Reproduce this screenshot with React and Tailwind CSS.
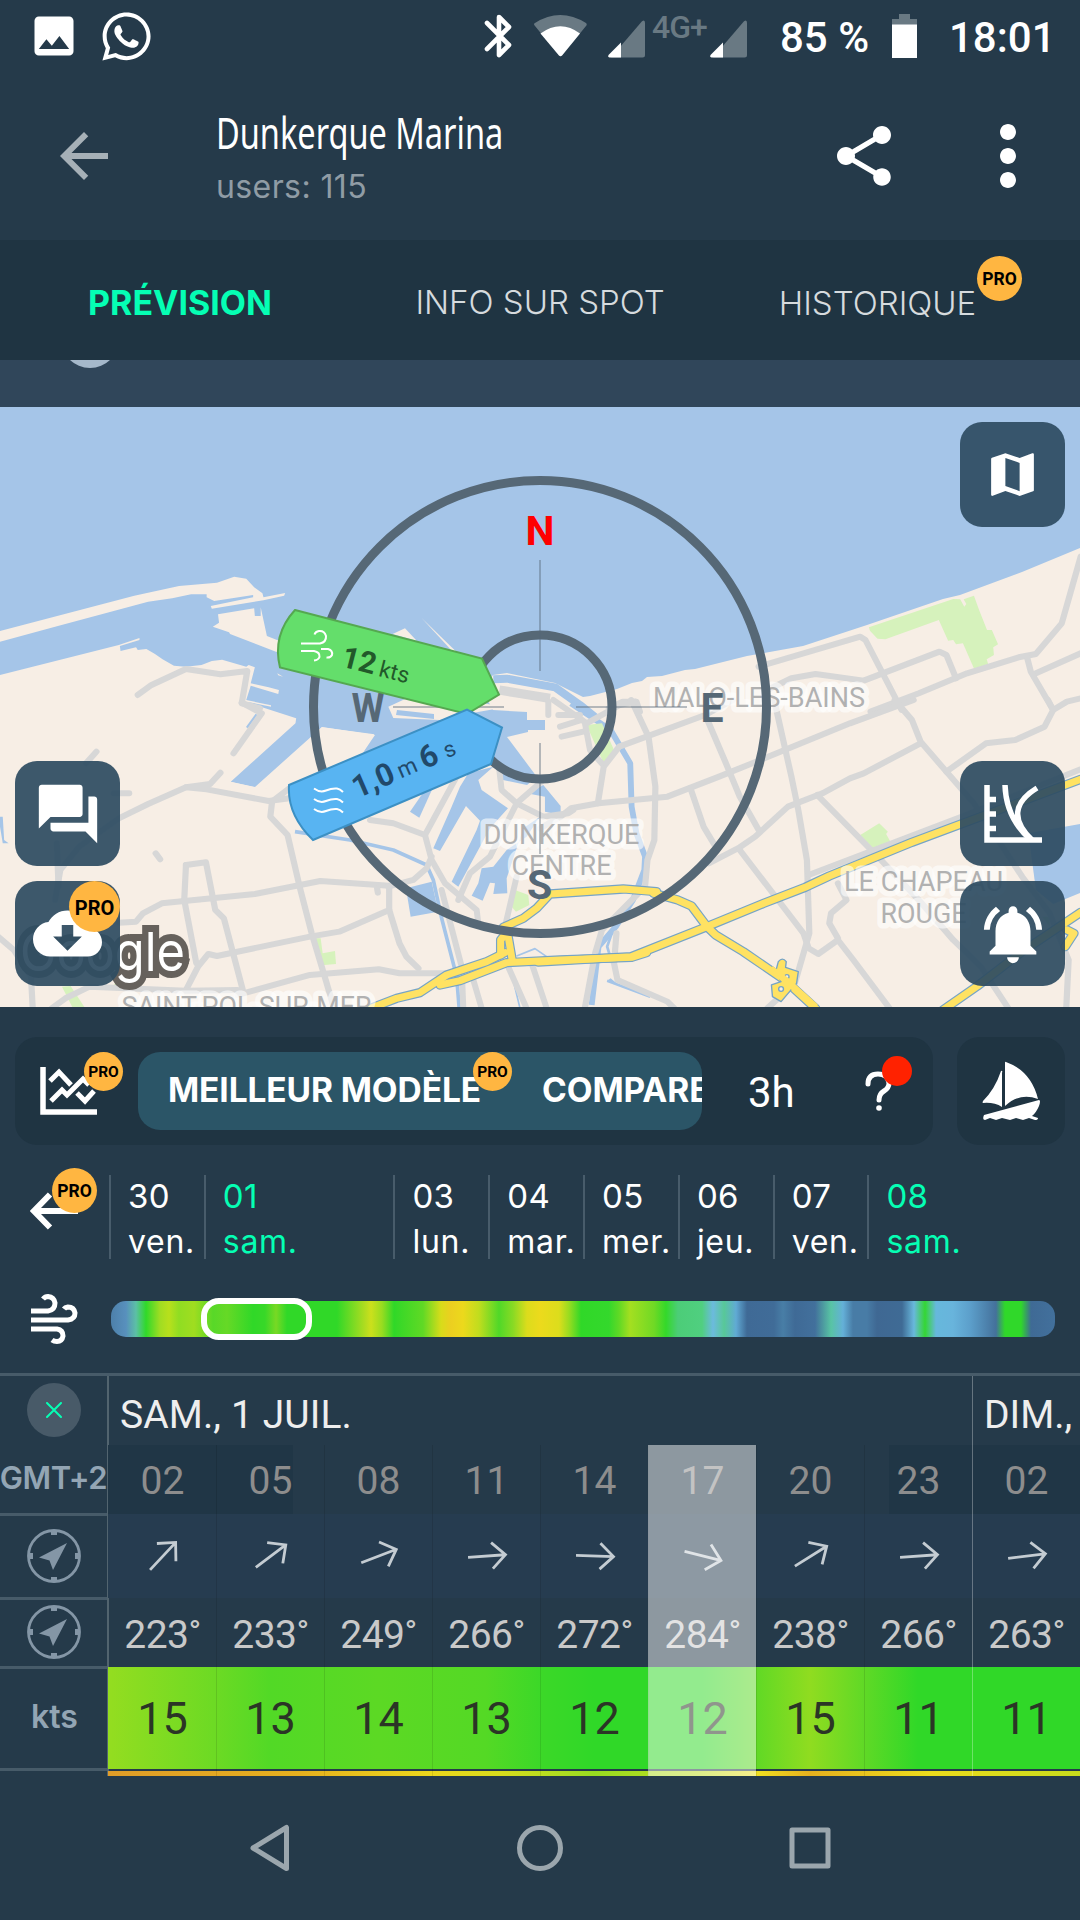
import React from "react";
import {
  MdArrowBack,
  MdCloudDownload,
  MdForum,
  MdImage,
  MdMap,
  MdMoreVert,
  MdNotificationsActive,
  MdShare,
} from "react-icons/md";
import { FaWhatsapp } from "react-icons/fa";

/* ---------- Shared bits ---------- */

const badgeSizes = {
  sm: "h-[39px] w-[39px] text-[15.5px]",
  md: "h-[45px] w-[45px] text-[17.5px]",
  lg: "h-[51px] w-[51px] text-[20px]",
};

function ProBadge({ size = "md", className = "" }) {
  return (
    <span
      className={`flex items-center justify-center rounded-full bg-[#ffb641] pt-[3px] font-['Roboto',sans-serif] font-bold leading-none text-black ${badgeSizes[size]} ${className}`}
    >
      PRO
    </span>
  );
}

function gradient(stops, from, to) {
  const list = stops
    .map(([x, color]) => `${color} ${(((x - from) / (to - from)) * 100).toFixed(2)}%`)
    .join(", ");
  return `linear-gradient(90deg, ${list})`;
}

/* ---------- Status bar ---------- */

function Signal({ className }) {
  return (
    <svg width="37" height="38" viewBox="0 0 37 38" className={className}>
      <path d="M3 37.5 34 1.2Q37 -1 37 3V35q0 2.5-2.5 2.5Z" fill="#697983" />
      <path d="M13 22.500V37.500H1.500Q-1 37 1 34.500Z" fill="#fff" />
    </svg>
  );
}

function StatusBar() {
  return (
    <div className="flex h-[72px] items-center font-['Roboto',sans-serif] text-white">
      <MdImage className="ml-[28px] h-[52px] w-[52px]" />
      <FaWhatsapp className="ml-[19px] h-[55px] w-[55px]" />
      <svg width="28" height="44" viewBox="0 0 28 44" className="ml-[330px]">
        <path
          d="M3 9 25 31 15 41V3L25 13 3 35"
          fill="none"
          stroke="#fff"
          strokeWidth="4.6"
          strokeLinecap="round"
          strokeLinejoin="round"
        />
      </svg>
      <svg width="53" height="42" viewBox="0 0 53 42" className="ml-[22px]">
        <path d="M1 11Q-1 9 1 8Q26 -8 52 8Q53.500 9.500 52 11L28 40.500Q26.500 42 25 40.500Z" fill="#697983" />
        <path d="M6.500 18.500Q26.500 4 46 18.500L28 40.500Q26.500 42 25 40.500Z" fill="#fff" />
      </svg>
      <Signal className="ml-[21px] mt-[5px]" />
      <span className="-mt-[19px] ml-[7px] w-[56px] whitespace-nowrap text-[32px] font-medium leading-none tracking-[-1px] text-[#697983]">
        4G+
      </span>
      <Signal className="ml-[2px] mt-[5px]" />
      <span className="ml-[33px] w-[88px] whitespace-nowrap pt-[3px] text-[42px] font-medium leading-none">85 %</span>
      <svg width="25" height="44" viewBox="0 0 25 44" className="ml-[24px]">
        <path d="M7 0H18V5H25V12H0V5H7Z" fill="#697983" />
        <path d="M0 10.500H25V44H0Z" fill="#fff" />
      </svg>
      <span className="ml-[32px] whitespace-nowrap pt-[3px] text-[42px] font-medium leading-none">18:01</span>
    </div>
  );
}

/* ---------- App bar and tabs ---------- */

function AppBar() {
  return (
    <header className="flex h-[168px] items-center">
      <MdArrowBack className="ml-[48px] h-[72px] w-[72px] text-[#a6b0b7]" />
      <div className="ml-[96px] flex w-[480px] flex-col pt-[5px]">
        <h1 className="origin-left scale-x-[0.731] whitespace-nowrap font-['Noto_Sans',sans-serif] text-[44.500px] font-normal leading-[54px] text-white">
          Dunkerque Marina
        </h1>
        <p className="pt-[3px] font-['Inter',sans-serif] text-[32px] font-normal leading-[50px] tracking-[0.4px] text-[#909ca5]">
          users: 115
        </p>
      </div>
      <MdShare className="ml-[132px] h-[72px] w-[72px] text-white" />
      <MdMoreVert className="ml-[60px] h-[96px] w-[96px] text-white" />
    </header>
  );
}

function Tabs() {
  return (
    <nav className="grid h-[120px] grid-cols-3 items-center bg-[#1f3442] text-center font-['Inter',sans-serif] text-[33px] leading-[40px]">
      <span className="pt-[5px] text-[34px] font-bold tracking-[0px] text-[#05ffb4]">PRÉVISION</span>
      <span className="pt-[3px] font-light text-[#d6dbde]">INFO SUR SPOT</span>
      <span className="relative pr-[45px] pt-[5px] font-light text-[#d6dbde]">
        HISTORIQUE
        <ProBadge className="absolute left-[257px] top-[-22px]" />
      </span>
    </nav>
  );
}

/* ---------- Map ---------- */

const ROAD = "#d7d7d7";
const WATER = "#a5c5e8";
const LAND = "#f7eee5";
const PARK = "#d6f2bc";

const tiles = {
  nw: "translate(0 400) scale(.3444 .3333)",
  ne: "translate(540 400) scale(.3444 .3333)",
  sw: "translate(0 700) scale(.3444 .3333)",
  se: "translate(540 700) scale(.3444 .3333)",
  mid: "translate(260 590) scale(.3333)",
};

const roads = {
  nw: ["400,885 440,855 540,807 640,823 718,813 702,910 755,925"],
  ne: [
    "635,800 930,710 945,720 1050,930",
    "660,870 730,835 800,822 940,842 1160,755 1180,765 1208,835",
    "960,935 1100,880 1240,820 1390,772 1440,762 1515,670 1570,470",
    "1440,820 1570,760",
    "1415,775 1425,815 1490,930 1530,905 1570,895",
    "200,925 240,905 280,905 290,935",
  ],
  sw: [
    "702,8 760,40 678,160",
    "640,218 610,252 540,262 430,312 345,355 230,440 175,510 160,600",
    "540,262 600,268 780,303 840,295",
    "840,265 790,305 785,350 835,405 870,560 905,700 940,820 970,925",
    "375,280 330,280",
    "280,155 250,190",
    "165,430 170,560",
    "452,460 465,478",
    "540,495 598,487 625,630 650,655 705,870",
    "540,495 535,600 570,790",
    "345,668 395,665 415,640 470,610 740,582 930,543 1130,557 1130,630 985,695 900,710 630,768 605,762 575,800 540,870",
    "1130,630 1160,730 1180,770 1215,805",
    "690,885 900,825 1100,808 1160,820 1300,820",
    "150,925 190,895 260,860 540,872 690,870",
    "-5,710 40,750 90,830 95,925",
    "1095,565 1097,578",
  ],
  se: [
    "0,385 60,350 90,325 170,310 370,290 520,230 640,180 900,70 1085,0",
    "168,310 185,200 230,140 480,45 560,0",
    "265,0 315,110 335,260 332,420 312,480 305,560 180,690 160,760 130,925",
    "480,45 540,190 580,290 635,390",
    "680,0 730,230 750,330 775,480 782,700 740,850 660,925",
    "437,265 475,380 510,440",
    "490,490 580,442 625,410 720,320 820,280 900,235 940,220 1105,130",
    "580,450 765,700 780,745 808,762 865,720 910,780 1015,925",
    "865,550 890,600 845,640 840,670 865,715",
    "805,285 990,480 1100,600 1200,720 1280,800 1360,925",
    "1030,0 1080,60 1105,125 1180,215 1260,310 1400,530 1480,640 1535,780 1528,925",
    "1180,215 1295,130 1380,120 1465,80 1490,30 1475,0",
    "780,525 1220,352 1570,208",
    "222,700 215,790 225,840 370,905 390,925",
  ],
  mid: [
    "865,335 865,375",
    "895,375 960,375",
    "900,410 965,390",
    "905,440 970,425",
    "975,400 990,480 1025,520",
    "880,330 930,365 980,400 1080,345 1125,335",
    "330,690 400,700 495,735 515,810 555,880 650,960 655,1000",
    "495,735 590,560",
    "385,890 460,870 500,835 515,800",
    "718,540 725,600 770,640 850,680 925,670 940,660",
    "850,570 770,640 690,800 630,850 595,930",
    "770,860 735,1010",
    "545,900 605,1130 610,1255",
    "740,1120 800,1255",
    "640,1170 665,1255",
    "815,1120 860,1255",
  ],
};

const water = {
  mid: [
    "450,665 478,683 520,590 495,600",
    "520,775 540,783 618,648 660,692 650,720 575,875 595,890 690,715 744,655 665,600 655,570 700,530 625,550 600,590 575,650",
    "665,835 700,830 740,780 800,740 840,680 790,715 740,865 742,910 700,912 705,880 690,878 668,932 635,917 655,880",
    "438,895 515,875 535,965 452,980",
    "800,610 850,585 902,648 902,675 855,665 855,620",
  ],
  se: ["1418,400 1570,372 1570,578 1490,612 1440,570", "195,842 225,852 205,835"],
  sw: ["0,350 8,350 12,420 25,430 8,430 0,380"],
};

const parks = {
  ne: [
    "955,682 1200,597 1220,598 1232,620 1238,612 1230,598 1260,587 1275,630 1298,690 1312,690 1330,733 1316,742 1318,765 1297,778 1302,795 1262,810 1228,730 1208,733 1200,720 1185,722 1158,660 1003,718 980,716 958,692",
  ],
  se: [
    "930,405 985,370 1010,395 1005,402 1020,430 972,450",
    "135,75 180,70 215,150 185,190",
    "1458,650 1480,650 1480,680",
  ],
  sw: ["180,860 205,858 245,921 210,921", "330,855 350,835 380,860"],
  mid: ["165,1045 182,1045 188,1090 225,1083 228,1122 185,1126", "765,900 805,915 808,945 768,965 755,950"],
};

const highways = {
  se: [
    "-5,786 265,770 480,682 650,610 770,562 840,528 1080,427 1570,238",
    "330,580 400,600 440,618 485,680 510,705 590,755 710,840 800,925",
    "1170,930 1270,858 1400,755 1570,637",
    "1530,690 1550,700 1525,740",
  ],
  mid: [
    "730,1012 790,985 830,955 870,912 1090,897 1190,905",
    "330,1256 410,1225 480,1208 560,1155 680,1115 735,1088",
    "540,1185 600,1172 740,1118 900,1110 1115,1102 1160,1088",
    "742,1025 722,1050 722,1095",
    "742,1025 757,1112",
  ],
};

function Shapes({ groups, fill }) {
  return Object.entries(groups).map(([tile, list]) => (
    <g key={tile} transform={tiles[tile]} fill={fill}>
      {list.map((points) => (
        <polygon key={points} points={points} />
      ))}
    </g>
  ));
}

function Lines({ groups, stroke, width }) {
  return Object.entries(groups).map(([tile, list]) => (
    <g
      key={tile}
      transform={tiles[tile]}
      fill="none"
      stroke={stroke}
      strokeWidth={width}
      strokeLinecap="round"
      strokeLinejoin="round"
    >
      {list.map((points) => (
        <polyline key={points} points={points} />
      ))}
    </g>
  ));
}

const placeNames = [
  { text: "MALO-LES-BAINS", x: 759, y: 707, w: 212 },
  { text: "DUNKERQUE", x: 561.5, y: 843.5, w: 156 },
  { text: "CENTRE", x: 561.5, y: 875, w: 100 },
  { text: "LE CHAPEAU", x: 923.5, y: 891, w: 159 },
  { text: "ROUGE", x: 923.5, y: 923, w: 86 },
  { text: "SAINT-POL-SUR-MER", x: 246.5, y: 1016, w: 250 },
];

function Compass() {
  return (
    <g fontFamily="Roboto, sans-serif">
      <g fill="none" stroke="#566876" strokeWidth="9">
        <circle cx="540" cy="707" r="226.500" />
        <circle cx="540" cy="707" r="72" />
      </g>
      <path
        d="M540 560V671M540 743V854M393 707H504M576 707H687"
        stroke="#566876"
        strokeOpacity=".55"
        strokeWidth="1.500"
      />
      <g fontSize="41" fontWeight="700" fill="#566876" textAnchor="middle">
        <text x="540" y="545" fill="#ff0000">N</text>
        <text x="368" y="722" textLength="33" lengthAdjust="spacingAndGlyphs">W</text>
        <text x="712" y="722">E</text>
        <text x="539.500" y="899">S</text>
      </g>

      {/* wind marker */}
      <g>
        <path
          d="M295 610 482 658.500 499 694.500 467 714 280 667.500Q272 635 295 610Z"
          fill="#64de6b"
          stroke="#55a850"
          strokeWidth="2"
        />
        <path
          d="M301 643.500H320Q326.500 642 326 636Q324.500 630.500 319 631Q315.500 631.500 314.500 634.500M301 651H314Q320 652 319.500 657Q318.500 660 314 660.500M321 649H328Q333 650.500 332 655Q330.500 658 326.500 657.500"
          fill="none"
          stroke="#fff"
          strokeWidth="2"
        />
        <g transform="translate(340 666) rotate(14.500)" fill="#22592a">
          <text fontSize="30" fontWeight="700">12</text>
          <text x="39" y="0" fontSize="22.500">kts</text>
        </g>
      </g>

      {/* wave marker */}
      <g>
        <path
          d="M289 785 467 709.500 502 727.500 491 764 313 840Q287 815 289 785Z"
          fill="#58b4f2"
          stroke="#3c90c4"
          strokeWidth="2"
        />
        <path
          d="M314 788.500Q320 793 326 790.500T337 788.500Q340 789 343 792M314 799Q320 803.500 326 801T337 799Q340 799.500 343 802.500M314 809Q320 813.500 326 811T337 809Q340 809.500 343 812.500"
          fill="none"
          stroke="#fff"
          strokeWidth="2"
        />
        <g transform="translate(357.500 798.500) rotate(-23.500)" fill="#21496a">
          <text fontSize="31" fontWeight="700">1,0</text>
          <text x="48" y="-1" fontSize="22.500">m</text>
          <text x="73" fontSize="31" fontWeight="700">6</text>
          <text x="98" y="-1" fontSize="22.500">s</text>
        </g>
      </g>
    </g>
  );
}

function MapCanvas() {
  return (
    <svg width="1080" height="600" viewBox="0 407 1080 600" className="block">
      <rect y="407" width="1080" height="600" fill={LAND} />
      <path
        fill={WATER}
        d="M0 407H1080V548L1022 572 960 595 943 599 867 625 803 646 764 653 747 656 695 669 685 670 662 676 647 677 642 681 632 683 617 689 590 696 583 697 555 683 507 673 493 675 482 690 493 710 527 712V720H545V730H528V732L507 737 537 777 527 785 503 780 493 757H360L375 735 322 727 255 787 231 782H0Z"
      />
      {/* harbour land */}
      <g transform={tiles.nw} fill={LAND}>
        <path d="M0 693 390 587 520 558 630 548 680 530 715 536 738 562 762 580 765 592 828 579 825 587 765 601 615 626 612 618 735 592V585L622 603 600 592V583H555L500 595 430 605 160 680 0 725Z" />
        <path d="M633 643 738 625 740 648H757V622L775 708 810 722 840 775 805 757 668 702 665 697 618 680 636 668Z" />
        <path d="M0 825 345 735 405 714V720L348 738 350 753 395 742 400 750 425 747 450 762 472 778 505 797 540 800 585 795 615 783 645 779 715 800 722 795 740 802 728 850 780 862 810 870 808 882 728 857 715 900 787 916V920L715 905 770 925 860 955 858 970 670 1145 740 1162V1500H0Z" />
        <path d="M805 820 822 830 808 826Z" />
        <path d="M1140 702 1176 685 1210 722Z" />
        <path d="M1225 655 1325 755 1312 752Z" />
      </g>
      <g transform={tiles.mid} fill={LAND}>
        <path d="M385 350 450 320 620 330 735 352 620 372 540 390 400 384Z" />
        <path d="M185 412 343 433 300 500 180 560 0 600Z" />
      </g>
      <path d="M397 710 434 714V719L396 715Z" fill={WATER} />

      <Shapes groups={water} fill={WATER} />
      <g fill="none" stroke={WATER} strokeLinejoin="round">
        <g transform={tiles.mid}>
          <path d="M700 268 740 266 885 292 960 345 1010 385" strokeWidth="24" />
          <path d="M105 725 270 750 400 780 500 825 520 870 545 985 590 1160 598 1260" strokeWidth="11" />
          <path d="M770 1098 825 1076 860 1100M750 1130 780 1255" strokeWidth="5" />
        </g>
        <g transform={tiles.se}>
          <path d="M90 10 205 90 262 190 266 320 280 400 305 470 303 510 270 600 220 680 170 740 150 915" strokeWidth="17" />
          <path d="M215 680 195 740 210 790M195 842 320 890" strokeWidth="8" />
        </g>
        <path transform={tiles.sw} d="M717 83 745 43" strokeWidth="7" />
      </g>
      <Shapes groups={parks} fill={PARK} />

      <path
        transform={tiles.mid}
        d="M718 300 790 312 870 325"
        fill="none"
        stroke={ROAD}
        strokeWidth="28"
      />
      <Lines groups={roads} stroke={ROAD} width="18" />
      <Lines groups={highways} stroke="#76a4c6" width="28" />
      <Lines groups={highways} stroke="#ffe262" width="21" />
      <g transform={tiles.se} stroke="#76a4c6" strokeWidth="4" fill="#ffe262" strokeLinejoin="round">
        <path d="M692 785Q704 770 715 785L713 802 750 815 745 850 700 905 675 890 672 855 700 845 685 812Z" />
        <circle cx="700" cy="867" r="7" fill={LAND} />
        <circle cx="717" cy="830" r="6" fill={LAND} />
      </g>
      <path
        transform={tiles.se}
        d="M670 806 720 846 800 921"
        fill="none"
        stroke="#ffe262"
        strokeWidth="20"
      />

      <g
        fontFamily="Roboto, sans-serif"
        fontSize="28"
        fill="#b1b1b1"
        textAnchor="middle"
        stroke="#ffffff"
        strokeOpacity=".62"
        strokeWidth="11"
        strokeLinejoin="round"
        paintOrder="stroke"
      >
        {placeNames.map((p) => (
          <text key={p.text} x={p.x} y={p.y} textLength={p.w} lengthAdjust="spacingAndGlyphs">
            {p.text}
          </text>
        ))}
      </g>
      <text
        x="20"
        y="971"
        fontFamily="Inter, sans-serif"
        fontSize="54"
        fontWeight="400"
        fill="#ffffff"
        stroke="#66615c"
        strokeWidth="14"
        paintOrder="stroke"
        textLength="165"
        lengthAdjust="spacingAndGlyphs"
      >
        Google
      </text>
      <Compass />
    </svg>
  );
}

function MapButton({ className, children }) {
  return (
    <button
      className={`absolute flex h-[105px] w-[105px] items-center justify-center rounded-[22px] bg-[#2e4c62]/93 text-white ${className}`}
    >
      {children}
    </button>
  );
}

function MapPanel() {
  return (
    <section className="relative h-[600px] overflow-hidden">
      <MapCanvas />
      <MapButton className="right-[15px] top-[15px]">
        <MdMap className="h-[57px] w-[57px]" />
      </MapButton>
      <MapButton className="left-[15px] top-[354px]">
        <MdForum className="h-[70px] w-[70px]" />
      </MapButton>
      <MapButton className="left-[15px] top-[474px]">
        <MdCloudDownload className="h-[69px] w-[69px]" />
        <ProBadge size="lg" className="absolute right-0 top-0" />
      </MapButton>
      <MapButton className="right-[15px] top-[354px]">
        <svg width="58" height="58" viewBox="0 0 58 58" fill="none" stroke="#fff" strokeWidth="5.500">
          <path d="M3 0V55H58M3 14.500H12M3 29H12M3 43.500H12" />
          <path d="M21 0Q22 33 46 54M53 3Q17 25 48 55" />
        </svg>
      </MapButton>
      <MapButton className="right-[15px] top-[474px]">
        <MdNotificationsActive className="h-[70px] w-[70px]" />
      </MapButton>
    </section>
  );
}

/* ---------- Model toolbar ---------- */

function ModelBar() {
  return (
    <div className="mt-[30px] flex h-[108px] pl-[15px] pr-[15px]">
      <div className="flex w-[918px] items-center rounded-[22px] bg-[#1f3442]">
        <div className="relative ml-[25px] h-[48px] w-[57px]">
          <svg width="57" height="48" viewBox="0 0 57 48" fill="none" stroke="#fff" strokeWidth="5">
            <path d="M3 0V45H57" strokeWidth="5.500" />
            <path d="M10 14 19 5 31 18M37 26 45 34 54 24" />
            <path d="M11 34 22 23 27 28 43 12 49 18" />
          </svg>
          <ProBadge size="sm" className="absolute left-[44px] top-[-15px]" />
        </div>
        <div className="relative ml-[41px] w-[564px]">
          <div className="flex h-[78px] items-center overflow-hidden whitespace-nowrap rounded-[22px] bg-[#2b5567] pl-[30px] font-['Inter',sans-serif] text-[33.500px] font-bold leading-none tracking-[-0.1px] text-white">
            <span className="w-[374px] shrink-0 pb-px">MEILLEUR MODÈLE</span>
            <span className="pb-px">COMPARER</span>
          </div>
          <ProBadge size="sm" className="absolute left-[335px] top-0" />
        </div>
        <span className="ml-[46px] pt-[4px] font-['Roboto',sans-serif] text-[42px] leading-none text-white">3h</span>
        <div className="relative ml-[70px] h-[40px] w-[28px]">
          <svg width="28" height="40" viewBox="0 0 28 40" fill="none" stroke="#fff" strokeWidth="5" strokeLinecap="round">
            <path d="M3 13Q3 3 13 3T24 12Q24 17 19 20Q14 23 14 29" />
            <circle cx="14" cy="37" r="2.800" fill="#fff" stroke="none" />
          </svg>
          <span className="absolute left-[17px] top-[-15px] h-[30px] w-[30px] rounded-full bg-[#ff2200]" />
        </div>
      </div>
      <div className="ml-auto flex w-[108px] items-center justify-center rounded-[22px] bg-[#1f3442]">
        <svg width="58" height="60" viewBox="0 0 58 60" fill="#fff">
          <path d="M24 1Q49 10 56 38Q38 31 23 45V2Q23 0 24 1Z" />
          <path d="M19 10Q21 9 20 12V46Q12 41 1 42Q0 42 1 40Q13 28 19 10Z" />
          <path d="M2 54 57 39Q59 39 57 45Q54 52 50 55L56 57Q56 59 53 59L47 57 41 59 34 57 28 59 20 57 14 59 8 57 3 59Q0 59 2 54Z" />
        </svg>
      </div>
    </div>
  );
}

/* ---------- Day picker ---------- */

const days = [
  { num: "30", name: "ven." },
  { num: "01", name: "sam.", weekend: true, wide: true },
  { num: "03", name: "lun." },
  { num: "04", name: "mar." },
  { num: "05", name: "mer." },
  { num: "06", name: "jeu." },
  { num: "07", name: "ven." },
  { num: "08", name: "sam.", weekend: true, wide: true },
];

function DayPicker() {
  return (
    <div className="mt-[30px] flex h-[84px]">
      <div className="relative w-[109px] shrink-0">
        <svg width="48" height="38" viewBox="0 0 48 38" className="ml-[30px] mt-[17px]" fill="none" stroke="#fff" strokeWidth="6">
          <path d="M20 2.500 4 19 20 35.500M5 19H48" />
        </svg>
        <ProBadge className="absolute left-[52px] top-[-7px]" />
      </div>
      <div className="flex font-['Inter',sans-serif]">
        {days.map((d) => (
          <div
            key={d.num}
            className={`shrink-0 border-l-2 border-[#485c6b] pl-[17px] font-normal leading-[46px] ${
              d.wide ? "w-[189.7px]" : "w-[94.8px]"
            } ${d.weekend ? "text-[#05ffb4]" : "text-white"}`}
          >
            <div className="-mt-[2px] text-[33px] tracking-[0.3px]">{d.num}</div>
            <div className="text-[32px] tracking-[0.7px]">{d.name}</div>
          </div>
        ))}
      </div>
    </div>
  );
}

const weekStops = [
  [111, "#4d80aa"], [126, "#5890bd"], [136, "#5cc0a5"], [146, "#30d92a"], [160, "#a0dd22"],
  [169, "#b8e01c"], [179, "#90dd22"], [194, "#a0dd20"], [213, "#58d828"], [227, "#66d926"],
  [253, "#30d828"], [265, "#38d828"], [276, "#78d924"], [287, "#30d828"], [337, "#30d828"],
  [365, "#b0dc20"], [371, "#cce01c"], [382, "#98dc20"], [394, "#30d828"], [423, "#60d925"],
  [441, "#d8dc1a"], [451, "#eccf20"], [463, "#ecd91c"], [479, "#c0dd1e"], [499, "#50d828"],
  [513, "#88da24"], [527, "#dcdc1c"], [540, "#ecda1c"], [559, "#dcdd1c"], [569, "#98dc20"],
  [581, "#30d828"], [609, "#34d82c"], [619, "#60d925"], [630, "#a4df20"], [654, "#70d925"],
  [666, "#34d82a"], [678, "#4ccd78"], [702, "#50cf80"], [713, "#6cbade"], [724, "#58c898"],
  [736, "#60aad4"], [747, "#3f6a96"], [774, "#406c98"], [783, "#487ea6"], [795, "#3f6a96"],
  [815, "#42709c"], [831, "#58c4a4"], [843, "#64b0d8"], [853, "#487ca6"], [867, "#487ca6"],
  [877, "#3f6893"], [902, "#3f6b95"], [914, "#68b8dc"], [925, "#34d634"], [936, "#66b8dc"],
  [953, "#68b4dc"], [970, "#5c9fcb"], [996, "#44719b"], [1005, "#30d82a"], [1021, "#30d82a"],
  [1031, "#3f6a95"], [1055, "#42709c"],
];

function WeekBar() {
  return (
    <div className="mt-[35px] flex h-[50px] items-center">
      <svg
        width="48"
        height="50"
        viewBox="0 0 48 50"
        className="ml-[30px]"
        fill="none"
        stroke="#fff"
        strokeWidth="5"
      >
        <path d="M1 17H18Q25 16 25 9Q24 3 18 2.500Q15 2.500 13 5" />
        <path d="M1 26H38Q45 25 45 19Q44 13 38 13Q35 13.500 34 15" />
        <path d="M1 35H27Q33 36 33 42Q32 47.500 27 47.500Q24 47.500 22 46" />
      </svg>
      <div className="relative ml-[33px] h-[36px] w-[944px]">
        <div
          className="h-full w-full rounded-[15px]"
          style={{ backgroundImage: gradient(weekStops, 111, 1055) }}
        />
        <div className="absolute left-[90px] top-[-3px] h-[42px] w-[111px] rounded-[18px] border-[6px] border-white" />
      </div>
    </div>
  );
}

/* ---------- Forecast table ---------- */

const hours = [
  { h: "02", deg: 223, kts: 15, plain: true },
  { h: "05", deg: 233, kts: 13 },
  { h: "08", deg: 249, kts: 14 },
  { h: "11", deg: 266, kts: 13 },
  { h: "14", deg: 272, kts: 12 },
  { h: "17", deg: 284, kts: 12, now: true },
  { h: "20", deg: 238, kts: 15 },
  { h: "23", deg: 266, kts: 11 },
  { h: "02", deg: 263, kts: 11, plain: true },
];

const windStops = [
  [108, "#94dd20"], [216, "#6cda24"], [270, "#52d926"], [378, "#5cd924"], [486, "#54d925"],
  [540, "#3cd828"], [594, "#30d828"], [702, "#30d828"], [756, "#60d925"], [810, "#90dc20"],
  [864, "#60d926"], [918, "#30d828"], [1080, "#30d828"],
];

const gustStops = [
  [108, "#e09c28"], [300, "#e6b01e"], [430, "#ecd61c"], [500, "#d8dc1c"], [560, "#b0dd20"],
  [594, "#98dd20"], [700, "#c0dd20"], [756, "#f0e020"], [810, "#e6b01e"], [930, "#ecdc1c"],
  [1080, "#c8dc1c"],
];

function CompassIcon() {
  return (
    <svg width="54" height="54" viewBox="0 0 54 54">
      <circle cx="27" cy="27" r="25.500" fill="none" stroke="#8496a6" strokeWidth="2.800" />
      <path d="M24 1h6v5h-6zM24 48h6v5h-6zM1 24h5v6h-5zM48 24h5v6h-5z" fill="#8496a6" />
      <path d="M40 14 26 41 22.500 31.500 12 28.500Z" fill="#8496a6" />
    </svg>
  );
}

function WindArrow({ deg }) {
  return (
    <svg width="42" height="42" viewBox="-21 -21 42 42">
      <path
        d="M-19 0H18M5 -13 18.500 0 5 13"
        transform={`rotate(${deg - 270})`}
        fill="none"
        stroke="#c4ccd2"
        strokeWidth="2.800"
      />
    </svg>
  );
}

function RowLabels() {
  return (
    <div className="w-[109px] shrink-0 border-r-2 border-[#52646f] font-['Inter',sans-serif] font-semibold text-[#93a5b4]">
      <div className="flex h-[69px] justify-center pt-[7px]">
        <button className="flex h-[54px] w-[54px] items-center justify-center rounded-full bg-[#485a68]">
          <svg width="16" height="16" viewBox="0 0 16 16" stroke="#05ffb4" strokeWidth="2" strokeLinecap="round">
            <path d="M1 1 15 15M15 1 1 15" />
          </svg>
        </button>
      </div>
      <div className="flex h-[71px] items-center justify-center whitespace-nowrap border-b-3 border-[#475b69] pb-[2px] text-[31px] tracking-[-0.5px]">
        GMT+2
      </div>
      <div className="flex h-[84px] items-center justify-center border-b-3 border-[#475b69] pb-[2px]">
        <CompassIcon />
      </div>
      <div className="flex h-[69px] items-center justify-center border-b-3 border-[#475b69] pb-[2px]">
        <CompassIcon />
      </div>
      <div className="flex h-[102px] items-center justify-center border-b-3 border-[#475b69] pb-[3px] pl-[2px] text-[32px]">
        kts
      </div>
    </div>
  );
}

function ForecastTable() {
  return (
    <section className="mt-[29px] flex h-[403px] border-t-[3px] border-[#475b69]">
      <RowLabels />
      <div className="relative w-[972px] shrink-0 -ml-px font-['Roboto',sans-serif]">
        <div className="flex h-[69px] items-center pt-[9px] text-[39px] text-[#eeeeee]">
          <span className="w-[864px] pl-[12px] tracking-[0.1px]">SAM., 1 JUIL.</span>
          <span className="pl-[12px]">DIM.,</span>
        </div>
        <div className="flex h-[69px]">
          <div className="w-[185px] bg-[#203646]" />
          <div className="w-[596px]" />
          <div className="grow bg-[#203646]" />
        </div>
        <div className="h-[84px] bg-[#263c50]" />
        <div className="h-[69px]" />
        <div className="h-[102px]" style={{ backgroundImage: gradient(windStops, 108, 1080) }} />
        <div className="mt-[2px] h-[5px]" style={{ backgroundImage: gradient(gustStops, 108, 1080) }} />

        {/* values laid over the coloured bands */}
        <div className="absolute inset-x-0 bottom-0 top-[69px] grid grid-cols-9">
          {hours.map((c, i) => (
            <div
              key={i}
              className={`relative flex flex-col border-l ${c.plain ? "border-transparent" : "border-black/10"}`}
            >
              <div className="flex h-[69px] items-center justify-center pt-[4px] text-[39px] text-[#8d8d8d]">
                {c.h}
              </div>
              <div className="flex h-[84px] items-center justify-center">
                <WindArrow deg={c.deg} />
              </div>
              <div className="flex h-[69px] items-center justify-center pt-[5px] text-[39px] tracking-[-0.5px] text-[#c9c9c9]">
                {c.deg}
                <span className="-mt-[6px] text-[34px]">°</span>
              </div>
              <div className="flex h-[102px] items-center justify-center pt-[2px] text-[45px] text-[#2b3526]">
                {c.kts}
              </div>
              {c.now && <div className="absolute inset-y-0 -left-px right-0 bg-white/48" />}
            </div>
          ))}
        </div>
        <div className="absolute bottom-0 left-[864px] top-0 w-px bg-white/30" />
      </div>
    </section>
  );
}

/* ---------- System navigation ---------- */

function NavBar() {
  return (
    <div className="flex grow items-center justify-between px-[249px]">
      <svg width="42" height="48" viewBox="0 0 42 48" fill="none" stroke="#9ba6ad" strokeWidth="5" strokeLinejoin="round">
        <path d="M37.500 3.500V44.500L4 24Z" />
      </svg>
      <svg width="48" height="48" viewBox="0 0 48 48" fill="none" stroke="#9ba6ad" strokeWidth="5">
        <circle cx="24" cy="24" r="20.500" />
      </svg>
      <svg width="42" height="42" viewBox="0 0 42 42" fill="none" stroke="#9ba6ad" strokeWidth="5" strokeLinejoin="round">
        <path d="M3 3H39V39H3Z" />
      </svg>
    </div>
  );
}

export default function App() {
  return (
    <main className="flex h-[1920px] w-[1080px] flex-col overflow-hidden bg-[#253a4a]">
      <StatusBar />
      <AppBar />
      <Tabs />
      <div className="h-[47px] overflow-hidden bg-[#30465a]">
        <div className="-mt-[50px] ml-[61px] h-[58px] w-[58px] rounded-full bg-[#a5b8ca]" />
      </div>
      <MapPanel />
      <ModelBar />
      <DayPicker />
      <WeekBar />
      <ForecastTable />
      <NavBar />
    </main>
  );
}
